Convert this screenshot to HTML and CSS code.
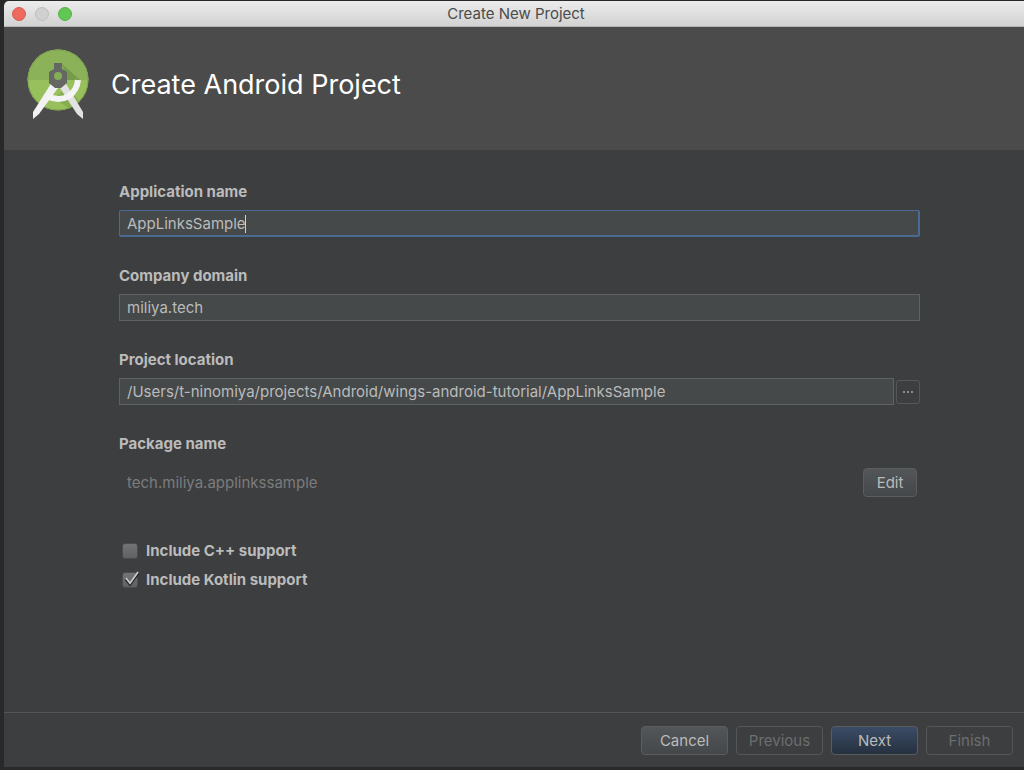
FILE: index.html
```html
<!DOCTYPE html>
<html lang="en">
<head>
<meta charset="utf-8">
<title>Create New Project</title>
<link rel="stylesheet" href="styles.css">
</head>
<body>
<div class="window">
  <div class="titlebar">
    <div class="lights">
      <button class="light close" aria-label="Close"></button>
      <button class="light minimize" aria-label="Minimize" disabled></button>
      <button class="light maximize" aria-label="Zoom"></button>
    </div>
    <span class="window-title">Create New Project</span>
  </div>
  <header class="banner">
    <svg class="logo" viewBox="0 0 64 72" aria-hidden="true">
      <defs>
        <clipPath id="disc"><circle cx="31" cy="31" r="30.500"/></clipPath>
      </defs>
      <g clip-path="url(#disc)">
        <rect width="64" height="64" fill="#98c05c"/>
        <rect width="64" height="31" fill="#8bb258"/>
        <path d="M35 15 53 31H40z" fill="#759b49"/>
        <path d="M40 38 56 56 47 62 27 50z" fill="#86ae4f"/>
        <circle cx="31" cy="31" r="30" fill="none" stroke="#7da54e"/>
      </g>
      <path d="M25 33 31 39 12 65 6 70 6 63z" fill="#f2f2f2"/>
      <path d="M38 33 33 39 50 65 56 70 56 63z" fill="#e2e2e2"/>
      <path d="M20 47Q32 53 42 47 50 41 51 31" fill="none" stroke="#f4f4f4" stroke-width="6"/>
      <path d="M27 14h8v6l5 3v11l-6 5h-6l-6-5V23l5-3z" fill="#656765"/>
      <circle cx="31" cy="27" r="4" fill="#87ac57"/>
    </svg>
    <h1 class="heading">Create Android Project</h1>
  </header>
  <form class="form">
    <div class="field">
      <label class="label" for="app">Application name</label>
      <div class="control">
        <input class="text active" id="app" type="text" value="AppLinksSample">
        <span class="caret"></span>
      </div>
    </div>
    <div class="field">
      <label class="label" for="domain">Company domain</label>
      <div class="control"><input class="text" id="domain" type="text" value="miliya.tech"></div>
    </div>
    <div class="field">
      <label class="label" for="location">Project location</label>
      <div class="control">
        <input class="text" id="location" type="text" value="/Users/t-ninomiya/projects/Android/wings-android-tutorial/AppLinksSample">
        <button class="browse" type="button" aria-label="Browse"><svg width="10" height="2" viewBox="0 0 10 2"><path d="M0 0h2v2H0zM4 0h2v2H4zM8 0h2v2H8z" fill="#8c8e8f"/></svg></button>
      </div>
    </div>
    <div class="package">
      <span class="label">Package name</span>
      <div class="package-row">
        <output class="package-name">tech.miliya.applinkssample</output>
        <button class="button edit" type="button">Edit</button>
      </div>
    </div>
    <div class="options">
      <label class="option"><input class="check" type="checkbox">Include C++ support</label>
      <label class="option"><span class="check-wrap"><input class="check" type="checkbox" checked><svg class="tick" viewBox="0 0 18 18" aria-hidden="true"><path d="M3 9 7 14 15 3" fill="none" stroke="#1d1e1f" stroke-width="3"/><path d="M3 8 7 13 15 2" fill="none" stroke="#c4c6c7" stroke-width="2"/></svg></span>Include Kotlin support</label>
    </div>
  </form>
  <footer class="actions">
    <button class="button" type="button">Cancel</button>
    <button class="button" type="button" disabled>Previous</button>
    <button class="button primary" type="button">Next</button>
    <button class="button" type="button" disabled>Finish</button>
  </footer>
</div>
</body>
</html>
```
FILE: styles.css
```css
* {
  box-sizing: border-box;
}

body {
  margin: 0;
  min-height: 100vh;
  display: flex;
  padding: 1px 0 3px 4px;
  background: #27292b;
  color: #bbbbbb;
  font: 15px/18px Inter, "Liberation Sans", sans-serif;
}

button,
input {
  font: inherit;
  color: inherit;
  margin: 0;
}

.window {
  flex: 1;
  min-width: 0;
  display: flex;
  flex-direction: column;
  background: #3d3e40;
  border-radius: 5px 0 0 0;
  overflow: hidden;
}

.titlebar {
  display: grid;
  grid-template-columns: 1fr auto 1fr;
  align-items: center;
  height: 26px;
  padding: 0 4px 0 8px;
  background: linear-gradient(#ececec, #d2d2d2);
  border-bottom: 1px solid #b4b4b4;
}

.lights {
  display: flex;
  gap: 9px;
}

.light {
  width: 14px;
  height: 14px;
  padding: 0;
  border: 1px solid #d95a50;
  border-radius: 50%;
  background: #ed6a5f;
}

.light.minimize {
  background: #d0d0d0;
  border-color: #bdbdbd;
}

.light.maximize {
  background: #62c655;
  border-color: #56b248;
}

.window-title {
  color: #4b4b4b;
}

.banner {
  display: flex;
  align-items: center;
  gap: 20px;
  height: 123px;
  padding: 0 23px 8px;
  background: #4b4b4b;
}

.logo {
  width: 64px;
  height: 72px;
}

.heading {
  margin: 0;
  color: #ffffff;
  font-size: 27px;
  font-weight: 400;
  line-height: 36px;
}

.form {
  flex: 1;
  display: flex;
  flex-direction: column;
  gap: 30px;
  padding: 33px 104px 0 115px;
}

.field,
.package {
  display: flex;
  flex-direction: column;
  gap: 9px;
}

.package {
  gap: 15px;
}

.label,
.option {
  font-weight: 700;
}

.control {
  position: relative;
  display: flex;
  align-items: center;
  gap: 2px;
}

.text {
  flex: 1;
  min-width: 0;
  height: 27px;
  padding: 0 7px;
  background: #45494a;
  border: 1px solid #5f6162;
  border-radius: 0;
  outline: none;
}

.text.active {
  border-color: #4a6a94;
  border-bottom-width: 2px;
  border-right-width: 2px;
  border-radius: 2px;
}

.caret {
  position: absolute;
  left: 126px;
  top: 5px;
  width: 1px;
  height: 18px;
  background: #d0d0d0;
}

.browse {
  display: flex;
  align-items: center;
  justify-content: center;
  width: 24px;
  height: 24px;
  padding: 0;
  background: none;
  border: 1px solid #555758;
  border-radius: 3px;
}

.package-row {
  display: flex;
  align-items: center;
  justify-content: space-between;
  padding: 0 3px 0 8px;
}

.package-name {
  color: #7b7c7d;
}

.button {
  width: 87px;
  height: 29px;
  padding: 0;
  background: linear-gradient(#525658, #44484a);
  border: 1px solid #5a5d5e;
  border-radius: 4px;
}

.button:disabled {
  background: none;
  border-color: #545657;
  color: #6c6e6f;
}

.button.primary {
  background: linear-gradient(#3a4c66, #26313f);
}

.button.edit {
  width: 54px;
}

.options {
  display: flex;
  flex-direction: column;
  align-items: flex-start;
  gap: 11px;
  padding: 15px 0 0 3px;
}

.option {
  display: flex;
  align-items: center;
  gap: 8px;
}

.check-wrap {
  position: relative;
  display: flex;
}

.check {
  appearance: none;
  width: 16px;
  height: 16px;
  margin: 0;
  background: linear-gradient(#737475, #606162);
  border: 1px solid #4b4c4d;
  border-radius: 3px;
}

.tick {
  position: absolute;
  left: 1px;
  top: -2px;
  width: 18px;
  height: 18px;
}

.actions {
  display: flex;
  justify-content: flex-end;
  gap: 8px;
  padding: 13px 11px 12px 0;
  border-top: 1px solid #535557;
}
```
